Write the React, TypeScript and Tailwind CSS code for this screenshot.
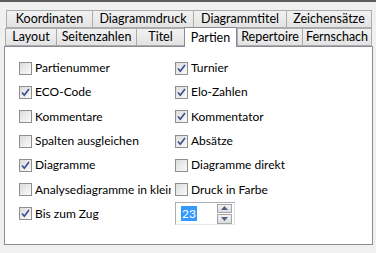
const TOP_TABS = [
  { label: "Koordinaten", w: 86 },
  { label: "Diagrammdruck", w: 101 },
  { label: "Diagrammtitel", w: 93 },
  { label: "Zeichensätze", w: 86 },
]

const BOTTOM_TABS = [
  { label: "Layout", w: 51 },
  { label: "Seitenzahlen", w: 80 },
  { label: "Titel", w: 48 },
  { label: "Partien", w: 53, active: true },
  { label: "Repertoire", w: 65 },
  { label: "Fernschach", w: 70 },
]

const ROWS: [string, boolean, string | null, boolean][] = [
  ["Partienummer", false, "Turnier", true],
  ["ECO-Code", true, "Elo-Zahlen", true],
  ["Kommentare", false, "Kommentator", true],
  ["Spalten ausgleichen", false, "Absätze", true],
  ["Diagramme", true, "Diagramme direkt", false],
  ["Analysediagramme in klein", false, "Druck in Farbe", false],
  ["Bis zum Zug", true, null, false],
]

function Check({ on }: { on: boolean }) {
  return (
    <span className="flex h-[13px] w-[13px] shrink-0 items-center justify-center border border-[#8e8f8f] bg-gradient-to-br from-[#dcdcdc] to-[#fbfbfb]">
      {on && (
        <svg width="9" height="9" viewBox="0 0 9 9">
          <path d="M1 4.5 L3.3 7.2 L8 1" fill="none" stroke="#3d4f8f" strokeWidth="1.7" />
        </svg>
      )}
    </span>
  )
}

function Tab({ label, w, active }: { label: string; w: number; active?: boolean }) {
  if (active) {
    return (
      <div
        className="relative z-10 -mt-[2px] -mb-px flex h-[20px] items-start justify-center border border-b-0 border-[#898c95] bg-white pt-[1px] text-black"
        style={{ width: w }}
      >
        {label}
      </div>
    )
  }
  return (
    <div
      className="flex h-[18px] items-center justify-center border border-r-0 border-[#acacac] bg-gradient-to-b from-[#f2f2f2] to-[#e3e3e3] last:border-r"
      style={{ width: w }}
    >
      {label}
    </div>
  )
}

export default function App() {
  return (
    <div
      className="h-[253px] w-[376px] overflow-hidden border-t-2 border-[#5d5d5d] bg-[#f0f0f0] text-[12.5px] text-black"
      style={{ fontFamily: 'Lato, "Noto Sans", sans-serif' }}
    >
      <div className="pl-[6px] pt-[8px]">
        <div className="flex">
          {TOP_TABS.map((t) => (
            <Tab key={t.label} {...t} />
          ))}
        </div>
        <div className="-ml-px flex items-end">
          {BOTTOM_TABS.map((t) => (
            <Tab key={t.label} {...t} />
          ))}
        </div>
      </div>
      <div className="ml-[4px] h-[199px] w-[369px] border border-[#898c95] bg-white pl-[14px] pt-[9px] text-[12px]">
        {ROWS.map(([l, lOn, r, rOn]) => (
          <div key={l} className="flex h-[24.3px] items-center">
            <div className="flex w-[156px] items-center gap-[3px] whitespace-nowrap">
              <Check on={lOn} />
              <span className="w-[136px] overflow-hidden">{l}</span>
            </div>
            {r ? (
              <div className="flex items-center gap-[3px] whitespace-nowrap">
                <Check on={rOn} />
                <span>{r}</span>
              </div>
            ) : (
              <div className="flex h-[23px] w-[60px] items-center border border-[#abadb3] border-b-[#e3e9ef] border-r-[#dbdfe6] bg-white pl-[5px] pr-[2px]">
                <span className="bg-[#3399ff] px-px leading-[15px] text-white">23</span>
                <div className="ml-auto flex flex-col">
                  <button className="flex h-[9px] w-[15px] items-center justify-center border border-[#a5a5a5] bg-gradient-to-b from-[#f3f3f3] to-[#dcdcdc]">
                    <svg width="7" height="4" viewBox="0 0 7 4">
                      <path d="M0 4 L3.5 0 L7 4 Z" fill="#4d6185" />
                    </svg>
                  </button>
                  <button className="mt-px flex h-[10px] w-[15px] items-center justify-center border border-[#a5a5a5] bg-gradient-to-b from-[#f3f3f3] to-[#dcdcdc]">
                    <svg width="7" height="4" viewBox="0 0 7 4">
                      <path d="M0 0 L7 0 L3.5 4 Z" fill="#4d6185" />
                    </svg>
                  </button>
                </div>
              </div>
            )}
          </div>
        ))}
      </div>
    </div>
  )
}
